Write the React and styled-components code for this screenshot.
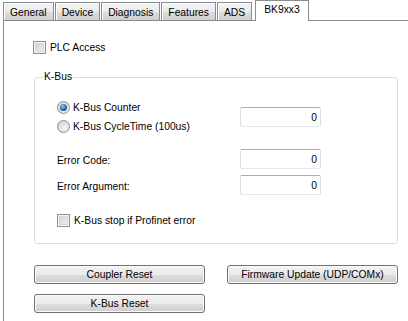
import React from 'react'
import styled, { createGlobalStyle } from "styled-components";

const GlobalStyle = createGlobalStyle`
  body {
    margin: 0;
    background: #ffffff;
    font-family: "Liberation Sans", Arial, sans-serif;
    font-size: 10.3px;
    color: #000000;
  }
`;

const tabs = ["General", "Device", "Diagnosis", "Features", "ADS", "BK9xx3"];

export default function App() {
  return (
    <Page>
      <GlobalStyle />
      <TabBar>
        {tabs.map((t) => (
          <Tab key={t} $active={t === "BK9xx3"}>{t}</Tab>
        ))}
      </TabBar>
      <Panel>
        <CheckRow>
          <CheckBox />
          <span>PLC Access</span>
        </CheckRow>

        <Group>
          <Legend>K-Bus</Legend>
          <FieldRow $top={14}>
            <RadioStack>
              <RadioRow>
                <Radio $checked />
                <span>K-Bus Counter</span>
              </RadioRow>
              <RadioRow>
                <Radio />
                <span>K-Bus CycleTime (100us)</span>
              </RadioRow>
            </RadioStack>
            <TextBox>0</TextBox>
          </FieldRow>
          <FieldRow $top={13}>
            <Label>Error Code:</Label>
            <TextBox>0</TextBox>
          </FieldRow>
          <FieldRow $top={6}>
            <Label>Error Argument:</Label>
            <TextBox>0</TextBox>
          </FieldRow>
          <CheckRow $top={19}>
            <CheckBox />
            <span>K-Bus stop if Profinet error</span>
          </CheckRow>
        </Group>

        <ButtonGrid>
          <Button>Coupler Reset</Button>
          <Button>Firmware Update (UDP/COMx)</Button>
          <Button>K-Bus Reset</Button>
        </ButtonGrid>
      </Panel>
    </Page>
  )
}

const Page = styled.div`
  width: 408px;
  height: 321px;
  overflow: hidden;
  background: #ffffff;
`;

const TabBar = styled.div`
  display: flex;
  align-items: flex-end;
  height: 20px;
  padding-left: 3px;
  gap: 1px;
`;

const Tab = styled.div`
  position: relative;
  box-sizing: border-box;
  display: flex;
  align-items: center;
  height: ${(p) => (p.$active ? "21px" : "18px")};
  padding: ${(p) => (p.$active ? "0 8px 3px" : "1px 6px 0")};
  margin: ${(p) => (p.$active ? "0 0 -1px 2px" : "0")};
  border: 1px solid #898c95;
  border-bottom: none;
  background: ${(p) =>
    p.$active
      ? "#ffffff"
      : "linear-gradient(#f3f3f3 0%, #ebebeb 50%, #dddddd 51%, #cfcfcf 100%)"};
  box-shadow: ${(p) => (p.$active ? "none" : "inset 1px 1px 0 #ffffff")};
  z-index: ${(p) => (p.$active ? 1 : 0)};
  white-space: nowrap;
`;

const Panel = styled.div`
  box-sizing: border-box;
  margin-left: 3px;
  height: 301px;
  border-top: 1px solid #898c95;
  border-left: 1px solid #898c95;
  padding: 20px 0 0 29px;
`;

const CheckRow = styled.div`
  display: flex;
  align-items: center;
  gap: 4px;
  height: 13px;
  margin-top: ${(p) => (p.$top ? `${p.$top}px` : "0")};
  white-space: nowrap;
`;

const CheckBox = styled.span`
  box-sizing: border-box;
  width: 13px;
  height: 13px;
  flex: none;
  border: 1px solid #8e8f8f;
  background: linear-gradient(135deg, #cbcbcb, #f6f6f6);
  box-shadow: inset 0 0 0 1px #f4f4f4, inset 0 0 0 2px #d6d6d6;
`;

const Group = styled.fieldset`
  box-sizing: border-box;
  width: 364px;
  height: 174px;
  margin: 16px 0 0 1px;
  padding: 0 0 0 22px;
  border: 1px solid #d5dfe5;
  border-radius: 3px;
`;

const Legend = styled.legend`
  margin-left: -14px;
  padding: 0 1px;
  line-height: 14px;
`;

const FieldRow = styled.div`
  display: flex;
  align-items: center;
  margin-top: ${(p) => p.$top}px;
`;

const RadioStack = styled.div`
  display: flex;
  flex-direction: column;
  width: 183px;
`;

const RadioRow = styled.div`
  display: flex;
  align-items: center;
  gap: 3px;
  height: 19px;
  white-space: nowrap;
`;

const Radio = styled.span`
  position: relative;
  box-sizing: border-box;
  width: 13px;
  height: 13px;
  flex: none;
  border-radius: 50%;
  border: 1px solid #8e8f8f;
  background: radial-gradient(circle at 65% 65%, #f4f4f4, #cdcdcd);
  &::after {
    content: "";
    display: ${(p) => (p.$checked ? "block" : "none")};
    position: absolute;
    left: 2px;
    top: 2px;
    width: 7px;
    height: 7px;
    border-radius: 50%;
    background: radial-gradient(circle at 40% 35%, #8fd0f5, #1b5d9e 60%, #0f3f78);
  }
`;

const Label = styled.span`
  width: 183px;
  white-space: nowrap;
  padding-top: 3px;
`;

const TextBox = styled.div`
  box-sizing: border-box;
  width: 81px;
  height: 20px;
  padding-right: 3px;
  display: flex;
  align-items: center;
  justify-content: flex-end;
  border: 1px solid #dbdfe6;
  border-top-color: #abadb3;
  border-bottom-color: #e3e9ef;
  border-radius: 2px;
  background: #ffffff;
`;

const ButtonGrid = styled.div`
  display: grid;
  grid-template-columns: 171px 171px;
  column-gap: 22px;
  row-gap: 10px;
  margin: 21px 0 0 1px;
`;

const Button = styled.div`
  box-sizing: border-box;
  height: 19px;
  display: flex;
  align-items: center;
  justify-content: center;
  border: 1px solid #707070;
  border-radius: 3px;
  background: linear-gradient(#f2f2f2 0%, #ebebeb 50%, #dddddd 51%, #cfcfcf 100%);
  box-shadow: inset 0 0 0 1px #fcfcfc;
  white-space: nowrap;
`;
